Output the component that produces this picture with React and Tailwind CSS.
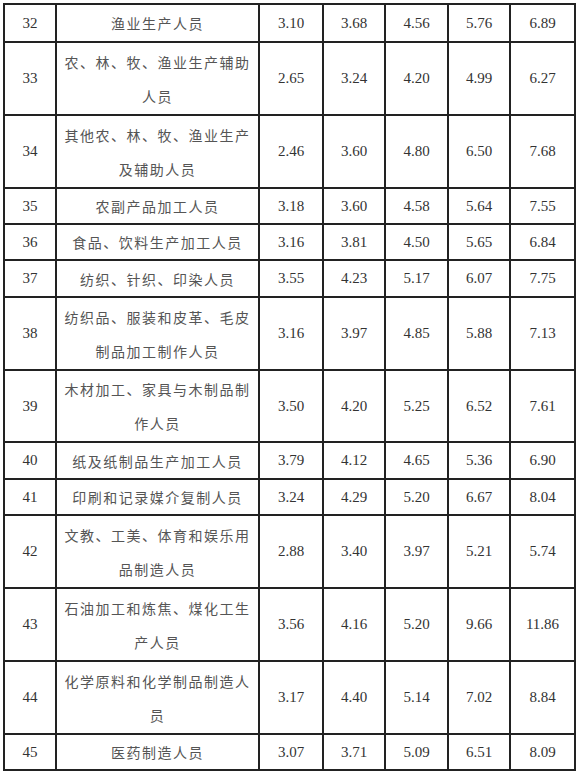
import React from 'react';

const rows = [
  { id: '32', name: ['渔业生产人员'], vals: ['3.10', '3.68', '4.56', '5.76', '6.89'], h: 'h-[38px]' },
  { id: '33', name: ['农、林、牧、渔业生产辅助', '人员'], vals: ['2.65', '3.24', '4.20', '4.99', '6.27'], h: 'h-[73px]' },
  { id: '34', name: ['其他农、林、牧、渔业生产', '及辅助人员'], vals: ['2.46', '3.60', '4.80', '6.50', '7.68'], h: 'h-[73px]' },
  { id: '35', name: ['农副产品加工人员'], vals: ['3.18', '3.60', '4.58', '5.64', '7.55'], h: 'h-[36px]' },
  { id: '36', name: ['食品、饮料生产加工人员'], vals: ['3.16', '3.81', '4.50', '5.65', '6.84'], h: 'h-[36px]' },
  { id: '37', name: ['纺织、针织、印染人员'], vals: ['3.55', '4.23', '5.17', '6.07', '7.75'], h: 'h-[37px]' },
  { id: '38', name: ['纺织品、服装和皮革、毛皮', '制品加工制作人员'], vals: ['3.16', '3.97', '4.85', '5.88', '7.13'], h: 'h-[73px]' },
  { id: '39', name: ['木材加工、家具与木制品制', '作人员'], vals: ['3.50', '4.20', '5.25', '6.52', '7.61'], h: 'h-[72px]' },
  { id: '40', name: ['纸及纸制品生产加工人员'], vals: ['3.79', '4.12', '4.65', '5.36', '6.90'], h: 'h-[37px]' },
  { id: '41', name: ['印刷和记录媒介复制人员'], vals: ['3.24', '4.29', '5.20', '6.67', '8.04'], h: 'h-[36px]' },
  { id: '42', name: ['文教、工美、体育和娱乐用', '品制造人员'], vals: ['2.88', '3.40', '3.97', '5.21', '5.74'], h: 'h-[73px]' },
  { id: '43', name: ['石油加工和炼焦、煤化工生', '产人员'], vals: ['3.56', '4.16', '5.20', '9.66', '11.86'], h: 'h-[73px]' },
  { id: '44', name: ['化学原料和化学制品制造人', '员'], vals: ['3.17', '4.40', '5.14', '7.02', '8.84'], h: 'h-[73px]' },
  { id: '45', name: ['医药制造人员'], vals: ['3.07', '3.71', '5.09', '6.51', '8.09'], h: 'h-[36px]' },
];

const serif = "font-['Liberation_Serif','Times_New_Roman',serif]";
const cjk = "font-['Noto_Sans_CJK_SC','Noto_Sans',sans-serif]";

export default function App() {
  return (
    <div className="min-h-screen bg-white pl-[3px] pt-[3px]">
      <table className="w-[571px] table-fixed border-collapse">
        <colgroup>
          <col className="w-[52px]" />
          <col className="w-[203px]" />
          <col className="w-[64px]" />
          <col className="w-[62px]" />
          <col className="w-[63px]" />
          <col className="w-[62px]" />
          <col className="w-[65px]" />
        </colgroup>
        <tbody>
          {rows.map((r) => (
            <tr key={r.id} className={r.h}>
              <td className={`border-2 border-[#222] p-0 text-center text-[15px] text-[#333] ${serif}`}>{r.id}</td>
              <td className={`border-2 border-[#222] p-0 text-center text-[14px] leading-[34px] tracking-[1.5px] text-[#555] ${cjk}`}>
                {r.name.map((line) => (
                  <div key={line}>{line}</div>
                ))}
              </td>
              {r.vals.map((v, i) => (
                <td key={i} className={`border-2 border-[#222] p-0 text-center text-[15px] text-[#333] ${serif}`}>
                  {v}
                </td>
              ))}
            </tr>
          ))}
        </tbody>
      </table>
    </div>
  );
}
